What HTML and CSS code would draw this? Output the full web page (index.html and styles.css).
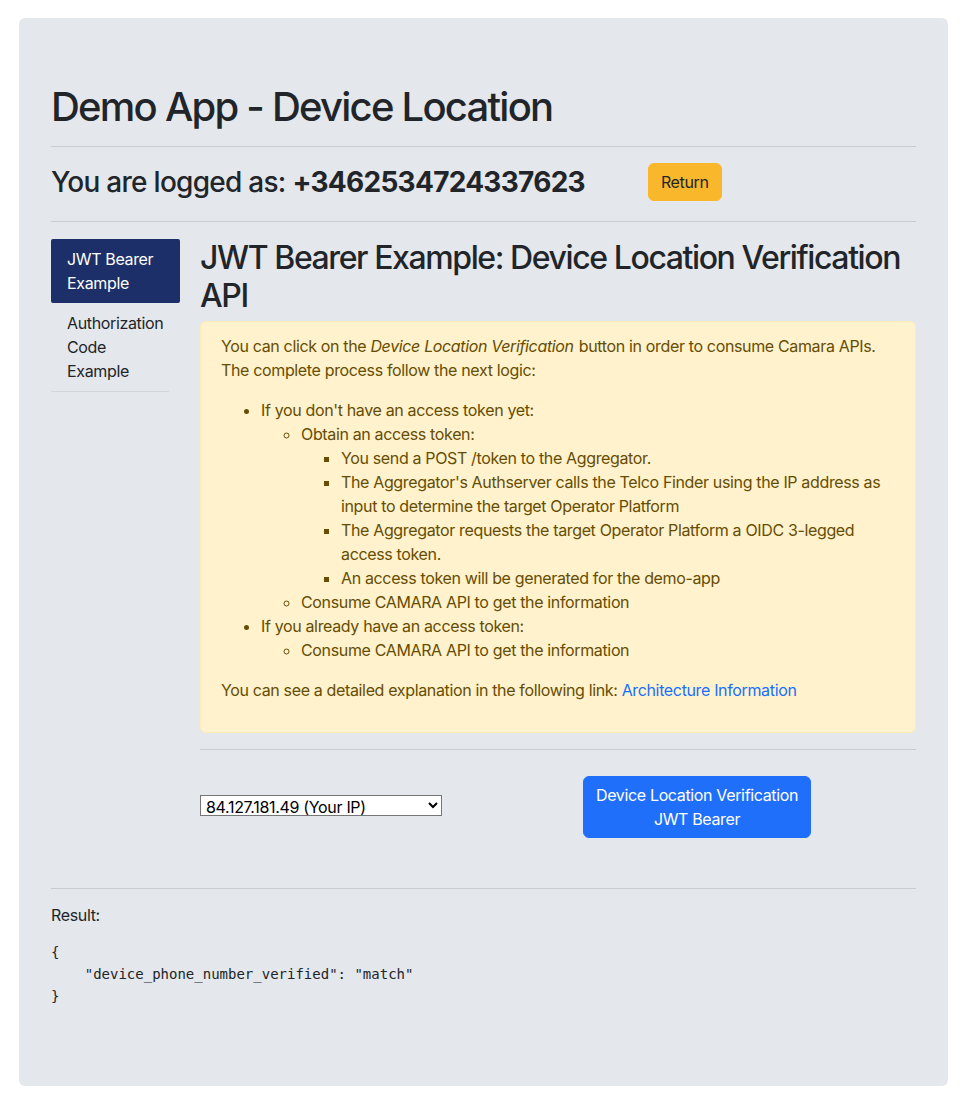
FILE: index.html
```html
<!DOCTYPE html>
<html lang="en">
<head>
<meta charset="utf-8">
<title>Demo App - Device Location</title>
<link rel="stylesheet" href="styles.css">
</head>
<body>
<div class="panel">
  <h1 class="title">Demo App - Device Location</h1>
  <hr class="rule">
  <div class="logged">
    <h3 class="logged-text">You are logged as: <strong>+3462534724337623</strong></h3>
    <button class="btn btn-warning">Return</button>
  </div>
  <hr class="rule rule-after-logged">
  <div class="layout">
    <nav class="side-nav">
      <a class="nav-item active">JWT Bearer Example</a>
      <a class="nav-item bordered">Authorization Code Example</a>
    </nav>
    <main class="main">
      <h2 class="section-title">JWT Bearer Example: Device Location Verification API</h2>
      <div class="alert">
        <p>You can click on the <em>Device Location Verification</em> button in order to consume Camara APIs. The complete process follow the next logic:</p>
        <ul class="l1">
          <li>If you don't have an access token yet:
            <ul class="l2">
              <li>Obtain an access token:
                <ul class="l3">
                  <li>You send a POST /token to the Aggregator.</li>
                  <li>The Aggregator's Authserver calls the Telco Finder using the IP address as input to determine the target Operator Platform</li>
                  <li>The Aggregator requests the target Operator Platform a OIDC 3-legged access token.</li>
                  <li>An access token will be generated for the demo-app</li>
                </ul>
              </li>
              <li>Consume CAMARA API to get the information</li>
            </ul>
          </li>
          <li>If you already have an access token:
            <ul class="l2">
              <li>Consume CAMARA API to get the information</li>
            </ul>
          </li>
        </ul>
        <p class="last">You can see a detailed explanation in the following link: <a class="link" href="#">Architecture Information</a></p>
      </div>
      <hr class="rule rule-main">
      <div class="actions">
        <div class="select-col">
          <select class="ip-select">
            <option>84.127.181.49 (Your IP)</option>
          </select>
        </div>
        <button class="btn btn-primary"><span class="line">Device Location Verification</span><span class="line">JWT Bearer</span></button>
      </div>
    </main>
  </div>
  <hr class="rule rule-result">
  <p class="result-label">Result:</p>
  <pre class="result">{
    "device_phone_number_verified": "match"
}</pre>
</div>
</body>
</html>
```

FILE: styles.css
```css
* { box-sizing: border-box; }

html, body {
  margin: 0;
  padding: 0;
  background: #ffffff;
}

body {
  font-family: Inter, "Noto Sans", "Liberation Sans", sans-serif;
  font-size: 16px;
  line-height: 24px;
  letter-spacing: -0.022em;
  color: #212529;
}

.panel {
  margin: 18px 15px 16px 19px;
  background: #e4e7eb;
  border-radius: 6px;
  padding: 65px 32px 40px 32px;
  min-height: 1068px;
}

.title {
  margin: 0;
  font-size: 40px;
  line-height: 48px;
  font-weight: 500;
  letter-spacing: -0.044em;
}

.rule {
  border: 0;
  border-top: 1px solid #c9ccd0;
  margin: 15px 0 16px 0;
}

.rule-after-logged {
  margin-top: 20px;
}

.logged {
  display: flex;
  align-items: center;
}

.logged-text {
  margin: 0;
  font-size: 28px;
  line-height: 34px;
  font-weight: 500;
  letter-spacing: -0.026em;
}

.logged-text strong {
  font-weight: 700;
}

.btn {
  font-family: inherit;
  font-size: 16px;
  line-height: 24px;
  letter-spacing: -0.022em;
  border: 1px solid transparent;
  border-radius: 6px;
  padding: 6px 12px;
  cursor: pointer;
}

.btn-warning {
  margin-left: 63px;
  background: #f9b82b;
  border-color: #f9b82b;
  color: #212529;
}

.btn-primary {
  background: #1f6ffb;
  border-color: #1f6ffb;
  color: #ffffff;
  padding: 6px 12px;
  min-width: 227px;
  display: flex;
  flex-direction: column;
  align-items: center;
}

.btn-primary .line {
  white-space: nowrap;
}

.layout {
  display: flex;
  gap: 20px;
  margin-top: 17px;
}

.side-nav {
  width: 129px;
  flex: none;
  display: flex;
  flex-direction: column;
}

.nav-item {
  display: block;
  padding: 8px 16px;
  color: #212529;
  text-decoration: none;
}

.nav-item.active {
  background: #1c2f68;
  color: #ffffff;
  border-radius: 2px;
}

.nav-item.bordered {
  position: relative;
}

.nav-item.bordered::after {
  content: "";
  position: absolute;
  left: 0;
  bottom: -1px;
  width: 118px;
  border-bottom: 1px solid #d3d6da;
}

.main {
  flex: 1;
  min-width: 0;
}

.section-title {
  margin: 0 0 6px 0;
  font-size: 32px;
  line-height: 38px;
  font-weight: 500;
  letter-spacing: -0.044em;
}

.alert {
  background: #fff2cc;
  border: 1px solid #ffecb5;
  border-radius: 6px;
  color: #664d03;
  padding: 12px 20px 14px 20px;
}

.alert p {
  margin: 0 0 16px 0;
}

.alert em {
  padding-right: 1px;
}

.alert ul {
  margin: 0;
  padding-left: 40px;
}

.alert ul.l1 {
  margin-bottom: 16px;
  list-style-type: disc;
}

.l2 { list-style-type: circle; }
.l3 { list-style-type: square; }

.link {
  color: #1a6ffa;
  text-decoration: none;
}

.rule-main {
  margin: 16px 0 26px 0;
}

.actions {
  display: flex;
  align-items: center;
}

.select-col {
  width: 383px;
  flex: none;
}

.ip-select {
  width: 242px;
  height: 21px;
  font-family: inherit;
  font-size: 16px;
  letter-spacing: -0.02em;
  color: #000;
  background: #ffffff;
  border: 1px solid #767676;
  border-radius: 0;
  padding: 0 1px;
}

.rule-result {
  margin: 50px 0 14px 0;
}

.result-label {
  margin: 0 0 14px 0;
  font-size: 16px;
}

.result {
  margin: 0;
  font-family: "DejaVu Sans Mono", "Liberation Mono", monospace;
  font-size: 14px;
  line-height: 22px;
  letter-spacing: 0;
  color: #212529;
}
```
